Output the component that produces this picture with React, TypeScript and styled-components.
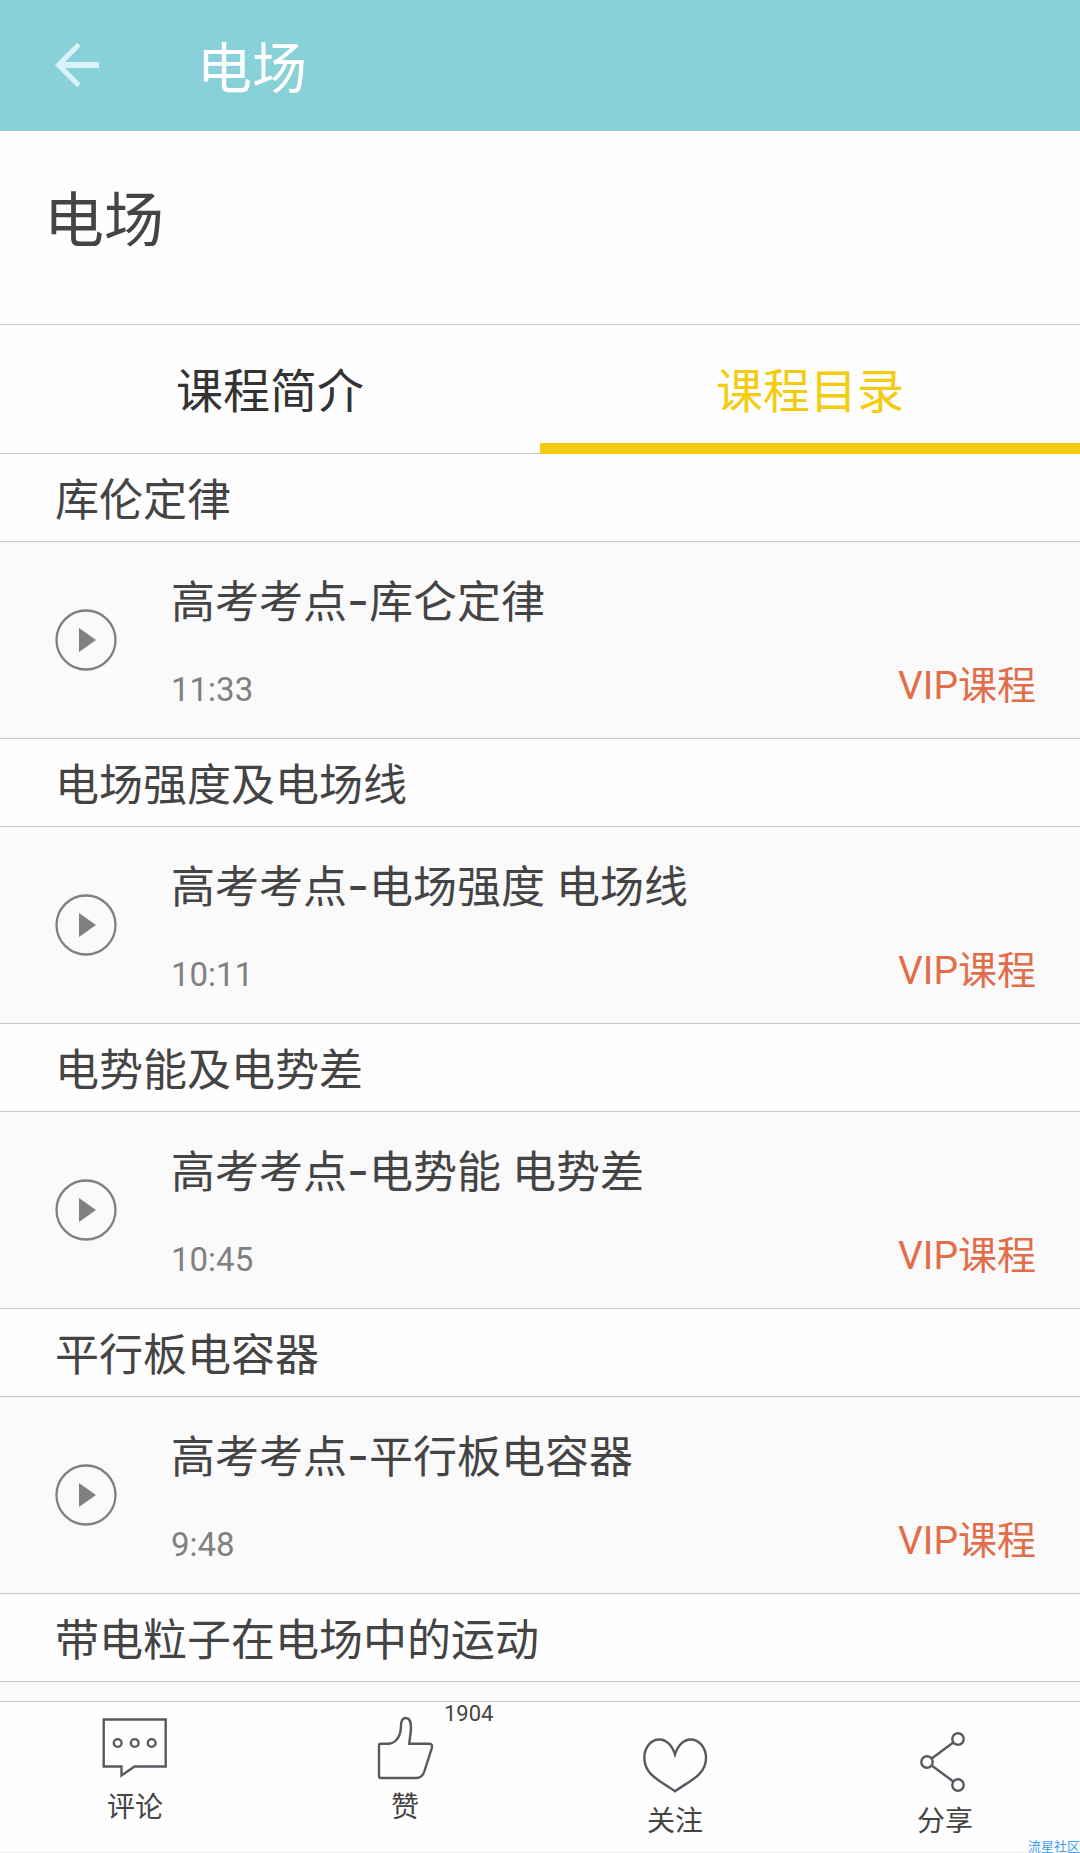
import React, { useState } from "react";
import styled, { createGlobalStyle } from "styled-components";

const color = {
  teal: "#89d1d8",
  ink: "#444444",
  grey: "#808080",
  line: "#c6c6c6",
  yellow: "#f5cb0e",
  vip: "#e26d49",
  icon: "#555a61",
  row: "#fafafa",
};

const GlobalStyle = createGlobalStyle`
  *, *::before, *::after { box-sizing: border-box; }
  body { margin: 0; background: #fefefe; }
  button {
    margin: 0;
    padding: 0;
    border: 0;
    background: none;
    color: inherit;
    font: inherit;
    cursor: pointer;
  }
  h1, h2, h3, p { margin: 0; padding: 0; font-weight: inherit; }
  svg { display: block; fill: none; }
`;

const Page = styled.div`
  position: relative;
  display: flex;
  flex-direction: column;
  height: 100vh;
  overflow: hidden;
  background: #fefefe;
  color: ${color.ink};
  font-family: Roboto, "Noto Sans CJK SC", sans-serif;
  font-weight: 400;
`;

const AppBar = styled.header`
  display: flex;
  align-items: center;
  gap: 96px;
  height: 131px;
  padding: 0 53px 2px;
  background: ${color.teal};
  color: #ffffff;
`;

const BarTitle = styled.p`
  padding-top: 8px;
  font-size: 55px;
  line-height: 64px;
`;

const CourseHead = styled.section`
  height: 193px;
  padding: 56px 44px 0;
`;

const CourseTitle = styled.h1`
  font-size: 60px;
  line-height: 70px;
`;

const Tabs = styled.div`
  display: grid;
  grid-template-columns: 1fr 1fr;
  height: 130px;
  border-top: 1px solid ${color.line};
`;

const Tab = styled.button<{ $active: boolean }>`
  padding-top: ${(p) => (p.$active ? 16 : 6)}px;
  border-bottom: ${(p) =>
    p.$active ? `11px solid ${color.yellow}` : `1px solid ${color.line}`};
  color: ${(p) => (p.$active ? color.yellow : "#333333")};
  font-size: 47px;
  line-height: 56px;
`;

const Catalog = styled.main`
  display: flex;
  flex: 1;
  flex-direction: column;
  min-height: 0;
  overflow: hidden;
`;

const ChapterTitle = styled.h2`
  flex: none;
  height: 88px;
  padding: 21px 55px 0;
  border-bottom: 1px solid ${color.line};
  font-size: 44px;
  line-height: 52px;
`;

const Lesson = styled.article`
  display: flex;
  flex: none;
  align-items: center;
  gap: 53px;
  height: 197px;
  padding: 0 44px 0 54px;
  border-bottom: 1px solid ${color.line};
  background: ${color.row};
`;

const LessonBody = styled.div`
  display: flex;
  flex: 1;
  flex-direction: column;
  gap: 35px;
  padding-top: 9px;
`;

const LessonTitle = styled.h3`
  font-size: 44px;
  line-height: 52px;
`;

const Dash = styled.span`
  font-family: Inter, sans-serif;
  font-size: 48px;
  line-height: 1;
`;

const LessonMeta = styled.div`
  display: flex;
  justify-content: space-between;
  align-items: flex-start;
`;

const Duration = styled.p`
  padding-top: 4px;
  color: ${color.grey};
  font-size: 33px;
  line-height: 44px;
`;

const Vip = styled.p`
  color: ${color.vip};
  font-size: 39px;
  line-height: 44px;
`;

const ListRest = styled.div`
  flex: 1;
  background: ${color.row};
`;

const ActionBar = styled.footer`
  display: grid;
  grid-template-columns: repeat(4, 1fr);
  height: 152px;
  border-top: 1px solid ${color.line};
  border-bottom: 1px solid #eeeeee;
`;

const Action = styled.button<{ $top: number }>`
  position: relative;
  display: flex;
  flex-direction: column;
  align-items: center;
  gap: 8px;
  padding-top: ${(p) => p.$top}px;
  font-size: 28px;
  line-height: 36px;
`;

const Count = styled.span`
  position: absolute;
  top: -1px;
  left: calc(50% + 39px);
  font-size: 22px;
  line-height: 26px;
`;

const Watermark = styled.span`
  position: absolute;
  right: 0;
  bottom: -1px;
  color: #3d9df2;
  font-size: 13px;
  line-height: 14px;
`;

const BackIcon = () => (
  <svg width="48" height="48" viewBox="0 0 48 48" stroke="#d9f4f8">
    <path d="M46 24H6" strokeWidth="6" />
    <path d="M26 3.5L5.500 24L26 44.500" strokeWidth="5" />
  </svg>
);

const PlayIcon = () => (
  <svg width="64" height="64" viewBox="0 0 64 64">
    <circle cx="32" cy="32" r="29.500" stroke={color.grey} strokeWidth="2.3" />
    <path d="M25 20L42 32L25 44Z" fill={color.grey} />
  </svg>
);

const ActionIcon = ({ children }: { children: React.ReactNode }) => (
  <svg
    width="68"
    height="68"
    viewBox="0 0 68 68"
    stroke={color.icon}
    strokeWidth="2.4"
  >
    {children}
  </svg>
);

const CommentIcon = () => (
  <ActionIcon>
    <path d="M2.700 5.500H64.700V52.500H33.500L20.500 61.500V52.500H2.700Z" />
    <circle cx="16.700" cy="29" r="3.900" />
    <circle cx="33.700" cy="29" r="3.900" />
    <circle cx="50.700" cy="29" r="3.900" />
  </ActionIcon>
);

const LikeIcon = () => (
  <ActionIcon>
    <path d="M10 29.700H18C25 29 30 22 30 12C30 6 32 4 34.900 4C38.500 4 40 7 40 14C40 19 38.500 25 38.300 29.700H58.500Q61.800 30 60.800 34L53.500 57Q51.500 64 45 64H10Q8 64 8 62V31.700Q8 29.700 10 29.700Z" />
  </ActionIcon>
);

const HeartIcon = () => (
  <ActionIcon>
    <path d="M34 26.500C31 17 25 11.500 18.500 11.500C9.500 11.500 3.300 20 3.300 30C3.300 48 22 54 34 63.300C46 54 65 48 65 30C65 20 58.500 11.500 49.500 11.500C43 11.500 37 17 34 26.500Z" />
  </ActionIcon>
);

const ShareIcon = () => (
  <ActionIcon>
    <path d="M20.700 30.500L42.300 14.500M20.700 37.500L42.300 53.500" />
    <circle cx="47" cy="11" r="5.700" />
    <circle cx="16" cy="34" r="5.700" />
    <circle cx="47" cy="57" r="5.700" />
  </ActionIcon>
);

const chapters = [
  { name: "库伦定律", lesson: "库仑定律", time: "11:33" },
  { name: "电场强度及电场线", lesson: "电场强度 电场线", time: "10:11" },
  { name: "电势能及电势差", lesson: "电势能 电势差", time: "10:45" },
  { name: "平行板电容器", lesson: "平行板电容器", time: "9:48" },
  { name: "带电粒子在电场中的运动" },
];

const tabs = ["课程简介", "课程目录"];

const actions = [
  { label: "评论", Icon: CommentIcon, top: 12 },
  { label: "赞", Icon: LikeIcon, top: 12, count: 1904 },
  { label: "关注", Icon: HeartIcon, top: 26 },
  { label: "分享", Icon: ShareIcon, top: 26 },
];

export default function App() {
  const [active, setActive] = useState(1);

  return (
    <Page lang="zh-CN">
      <GlobalStyle />
      <AppBar>
        <button type="button" aria-label="返回">
          <BackIcon />
        </button>
        <BarTitle>电场</BarTitle>
      </AppBar>
      <CourseHead>
        <CourseTitle>电场</CourseTitle>
      </CourseHead>
      <Tabs role="tablist">
        {tabs.map((name, i) => (
          <Tab
            key={name}
            type="button"
            role="tab"
            aria-selected={active === i}
            $active={active === i}
            onClick={() => setActive(i)}
          >
            {name}
          </Tab>
        ))}
      </Tabs>
      <Catalog>
        {chapters.map((chapter) => (
          <React.Fragment key={chapter.name}>
            <ChapterTitle>{chapter.name}</ChapterTitle>
            {chapter.lesson && (
              <Lesson>
                <button type="button" aria-label={`播放 ${chapter.lesson}`}>
                  <PlayIcon />
                </button>
                <LessonBody>
                  <LessonTitle>
                    高考考点<Dash>-</Dash>
                    {chapter.lesson}
                  </LessonTitle>
                  <LessonMeta>
                    <Duration>{chapter.time}</Duration>
                    <Vip>VIP课程</Vip>
                  </LessonMeta>
                </LessonBody>
              </Lesson>
            )}
          </React.Fragment>
        ))}
        <ListRest />
      </Catalog>
      <ActionBar>
        {actions.map(({ label, Icon, top, count }) => (
          <Action key={label} type="button" $top={top}>
            <Icon />
            {label}
            {count && <Count>{count}</Count>}
          </Action>
        ))}
      </ActionBar>
      <Watermark>流星社区</Watermark>
    </Page>
  );
}
